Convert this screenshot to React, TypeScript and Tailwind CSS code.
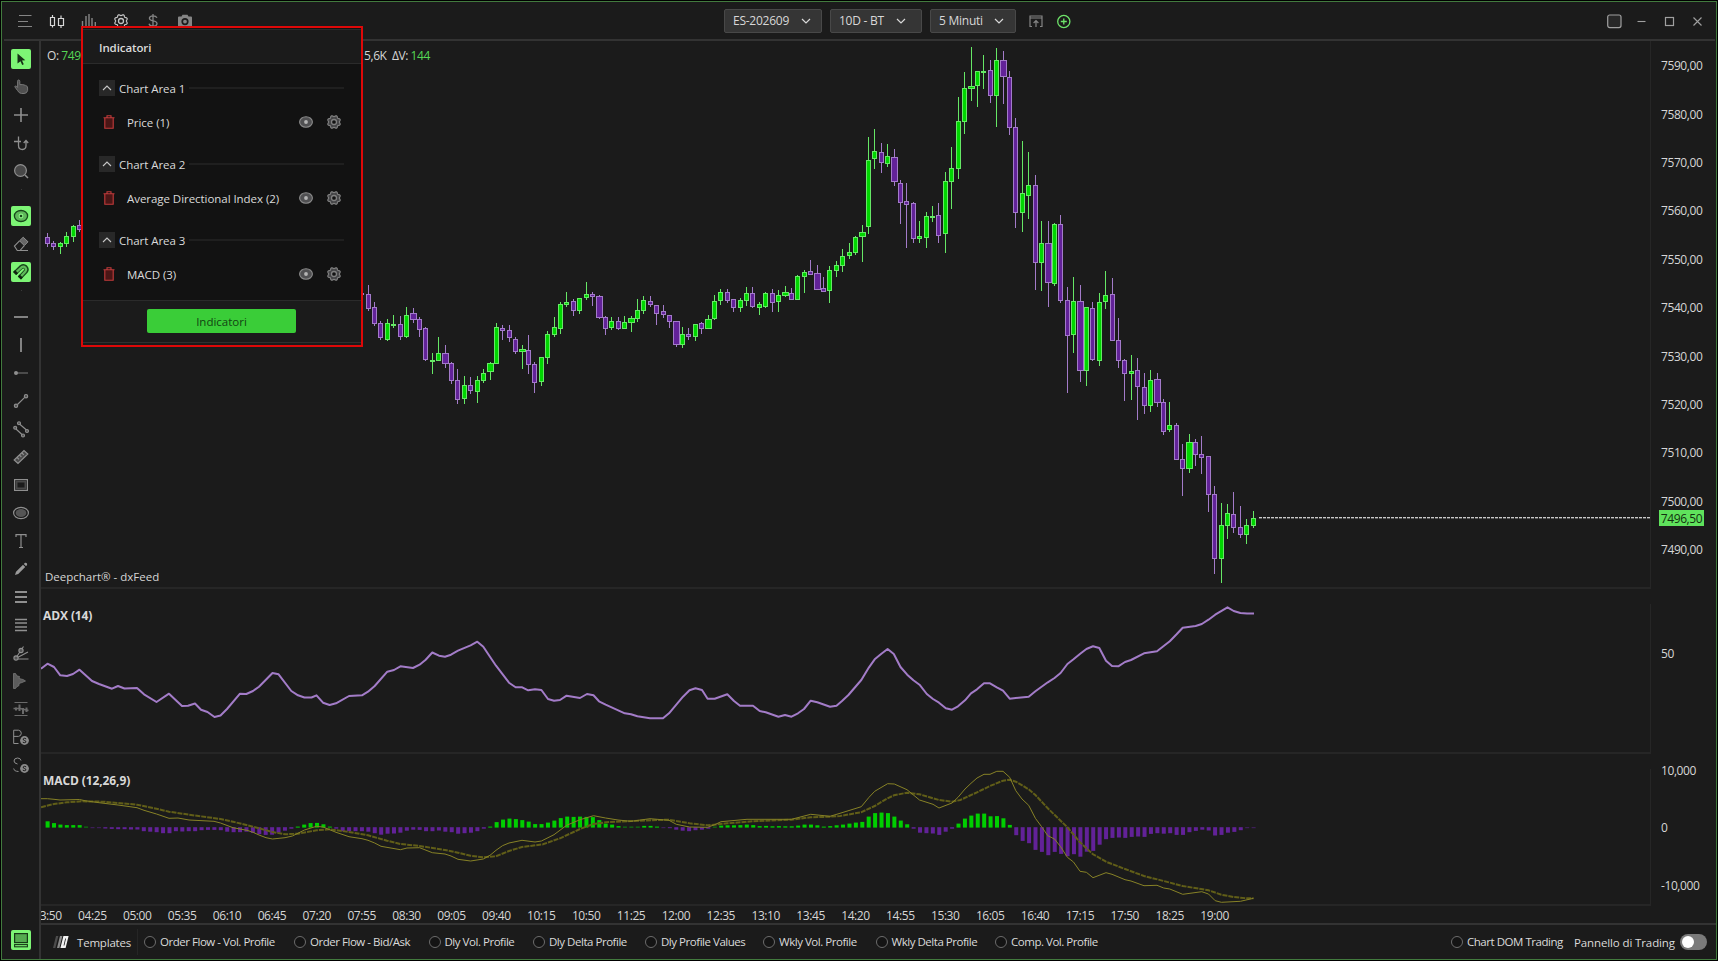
import React from "react";

type Candle = [number, 0 | 1, number, number, number, number, 1?];

const CANDLES: Candle[] = [
  [47, 0, 237, 244, 233, 247], [53, 0, 243, 247, 241, 250], [60, 1, 243, 247, 242, 254],
  [66, 1, 236, 244, 232, 247], [73, 1, 226, 237, 225, 242], [79, 0, 225, 230, 220, 232],
  [361, 0, 293, 295, 290, 297], [368, 0, 294, 309, 285, 311], [374, 0, 307, 324, 302, 326],
  [380, 0, 323, 338, 321, 340], [387, 1, 323, 340, 319, 341], [393, 1, 324, 326, 315, 328],
  [400, 0, 324, 337, 316, 340], [406, 1, 315, 337, 307, 338], [413, 0, 313, 320, 308, 323, 1],
  [419, 0, 319, 330, 317, 337], [425, 0, 328, 360, 327, 361], [432, 1, 360, 362, 353, 374],
  [438, 1, 353, 361, 337, 361], [445, 0, 353, 364, 345, 368, 1], [451, 0, 363, 381, 362, 384],
  [457, 0, 380, 400, 369, 404], [464, 1, 385, 399, 376, 404], [470, 0, 385, 391, 377, 394],
  [477, 1, 380, 392, 376, 403], [483, 1, 373, 381, 369, 383], [490, 1, 363, 372, 362, 380, 1],
  [496, 1, 327, 364, 323, 364], [502, 0, 328, 331, 325, 340], [509, 0, 330, 338, 325, 342],
  [515, 0, 339, 352, 337, 354], [522, 1, 349, 352, 345, 369, 1], [528, 0, 350, 365, 335, 374],
  [534, 0, 364, 383, 362, 393], [541, 1, 357, 382, 357, 386], [547, 1, 334, 358, 331, 364],
  [554, 1, 327, 335, 317, 337], [560, 1, 304, 329, 302, 334], [566, 1, 302, 305, 292, 307],
  [573, 0, 301, 311, 299, 316], [579, 1, 298, 311, 298, 314], [586, 1, 294, 298, 282, 300],
  [592, 0, 294, 297, 292, 306], [599, 0, 296, 318, 295, 319, 1], [605, 0, 317, 329, 316, 335],
  [611, 1, 321, 328, 317, 330], [618, 0, 321, 329, 317, 330], [624, 1, 322, 329, 316, 329],
  [631, 1, 318, 323, 316, 332, 1], [637, 1, 310, 319, 299, 322], [643, 1, 300, 311, 296, 314],
  [650, 0, 301, 305, 296, 307], [656, 0, 305, 314, 305, 325], [663, 0, 311, 315, 305, 318],
  [669, 0, 315, 322, 315, 328], [676, 0, 321, 345, 321, 347, 1], [682, 1, 334, 345, 327, 348],
  [688, 0, 334, 337, 328, 340], [695, 1, 324, 337, 324, 341], [701, 0, 323, 329, 322, 334],
  [708, 1, 319, 329, 315, 329, 1], [714, 1, 301, 319, 295, 320], [720, 1, 292, 301, 289, 305],
  [727, 0, 292, 301, 289, 303], [733, 0, 299, 308, 299, 312], [740, 1, 300, 308, 298, 312],
  [746, 1, 293, 301, 287, 306], [752, 0, 293, 307, 287, 308], [759, 1, 304, 308, 302, 315],
  [765, 1, 293, 307, 292, 308], [772, 0, 293, 303, 289, 312], [778, 1, 295, 302, 290, 312],
  [785, 1, 292, 296, 286, 297, 1], [791, 0, 293, 300, 288, 300], [797, 1, 276, 300, 275, 300],
  [804, 1, 272, 277, 270, 293], [810, 0, 271, 275, 260, 275], [817, 0, 273, 290, 265, 290, 1],
  [823, 0, 288, 292, 277, 292], [829, 1, 270, 291, 266, 303], [836, 1, 265, 271, 261, 277],
  [842, 1, 256, 266, 249, 272], [849, 1, 252, 256, 243, 259], [855, 1, 237, 253, 236, 255],
  [862, 1, 232, 237, 225, 262, 1], [868, 1, 160, 227, 137, 234], [874, 1, 151, 159, 129, 169],
  [881, 0, 152, 163, 143, 173], [887, 1, 156, 164, 144, 167], [894, 0, 157, 182, 149, 186, 1],
  [900, 0, 183, 203, 180, 224], [906, 0, 201, 205, 183, 248], [913, 0, 203, 239, 202, 243],
  [919, 1, 236, 239, 221, 243], [926, 1, 216, 238, 212, 248], [932, 1, 216, 218, 206, 222],
  [938, 0, 215, 236, 203, 243], [945, 1, 181, 234, 172, 253], [951, 1, 168, 182, 147, 209],
  [958, 1, 121, 169, 97, 179], [964, 1, 88, 122, 72, 134], [971, 1, 86, 89, 47, 101, 1],
  [977, 1, 71, 86, 71, 107], [983, 1, 71, 73, 55, 89], [990, 0, 70, 96, 60, 103],
  [996, 1, 60, 96, 48, 127], [1003, 0, 60, 77, 51, 104, 1], [1009, 0, 77, 128, 71, 135],
  [1015, 0, 127, 213, 118, 228], [1022, 1, 193, 213, 141, 232], [1028, 1, 185, 196, 152, 219],
  [1035, 0, 185, 263, 175, 290], [1041, 1, 243, 263, 221, 291], [1048, 0, 243, 283, 221, 307, 1],
  [1054, 1, 224, 284, 223, 286], [1060, 0, 224, 301, 215, 303], [1067, 0, 300, 336, 287, 393],
  [1073, 1, 301, 335, 277, 353], [1080, 0, 301, 371, 285, 382, 1], [1086, 1, 307, 371, 307, 386],
  [1092, 0, 308, 360, 302, 361], [1099, 1, 302, 361, 293, 366], [1105, 1, 295, 302, 271, 309],
  [1112, 0, 294, 341, 278, 341], [1118, 0, 340, 361, 318, 368], [1124, 0, 360, 374, 359, 401],
  [1131, 1, 371, 374, 355, 400], [1137, 0, 370, 387, 358, 420], [1144, 0, 387, 406, 373, 414],
  [1150, 1, 380, 406, 370, 412], [1157, 0, 379, 403, 373, 407, 1], [1163, 0, 402, 432, 399, 435],
  [1169, 1, 425, 430, 402, 432], [1176, 0, 425, 460, 423, 460], [1182, 0, 459, 469, 444, 496],
  [1189, 1, 442, 469, 434, 473, 1], [1195, 0, 442, 455, 439, 466], [1201, 0, 454, 458, 436, 474],
  [1208, 0, 456, 495, 456, 512], [1214, 0, 494, 559, 486, 574], [1221, 1, 525, 559, 503, 583],
  [1227, 1, 513, 526, 504, 539], [1233, 0, 514, 528, 492, 533], [1240, 0, 527, 535, 506, 538],
  [1246, 1, 525, 535, 519, 544], [1253, 1, 518, 526, 511, 528],
];

const ADX =
  "41,668.7 47.5,663.7 54,667 60.3,675.3 67,676 73,674 79.5,669.7 92,681 99,684 112,688.7 118,686 124.5,688.5 137,688 144,694.3 156.5,702 169,693.7 182,706 188,705.7 195,703.5 201,709.7 207.5,712 214.5,717 220.5,715.5 227,709 240,693.7 246.3,694 253,691 259,686.7 272.5,673 278.6,674.3 291.3,691 298,695.3 304.4,697.5 311.5,697.5 316.5,695.3 323,702.7 329.6,705 336,703.3 349,696 362,695.3 368,691.7 374.7,686 387.3,671.7 394,670 400.4,666.3 413,668 419.6,664.7 425.7,659.7 432.3,652.5 439,655.7 445,656.7 451,654.7 458,650.7 470.6,645.3 477.3,641.7 483.3,646.7 496,665.7 509,682.7 515.6,687.3 522.2,687.3 528.2,690.3 535,689.3 541.4,690 548,699 554,700.7 560,700 566.6,695.7 580,698 587,694 593.5,695.3 599,701.3 605.6,704.7 624.8,713.3 631,714.3 637.4,716.3 650,718.3 663,718.3 669,713.3 683,696.7 689.5,690.3 695.5,688.3 702,690 707.6,698.7 714.7,698.7 727.3,694.3 734,701 740,705.7 753,705.7 759.7,711 765.7,712.3 778.4,716.7 785,715 791.5,716.7 798,713.3 804,709 810.7,700.7 817.3,702.3 830,706.7 836.5,705.7 842,701 848.4,695 861.3,680 869,667.3 874.7,659.3 881.4,653.7 887.6,649 893.8,654 900.5,667 907.2,674.7 913.4,680.3 919.5,684.7 926.8,694 933,699 939,702.7 945.8,708.3 952,709.7 958,706.3 965,700.3 971,693.3 977,689.3 984,683.3 990,683.3 996.8,687.3 1003,690.7 1009.7,698.7 1015.8,698 1028.7,696.7 1035.4,691.3 1047.8,682.3 1054.5,678 1060.6,673 1067.4,664 1073.5,659.3 1080.2,653.7 1086.4,649 1093,646.3 1099.3,648 1106,660.7 1112,666 1118.3,666.3 1125,662 1131,660 1144,653.3 1157,651.3 1163.7,646 1169.8,641.3 1176.6,634.3 1182.7,627.7 1195.6,626 1201.8,624 1208.5,619.7 1215.2,614.7 1227.5,607.3 1233.7,611 1240.4,613 1247,613.5 1254,613.5";

const MACD =
  "41,798.7 47.5,798.7 54,799.3 60,800 79.5,799.5 85,800.7 99,802.7 118,805 137,807.7 144,810.3 156.5,814 169,818.3 178,818 189,820 214,821.3 220.5,823 233,827.7 247,830.3 253,832.3 259,835 266,837.7 272.5,839 285,837.7 292.4,836 304.4,830 316.5,826.3 323,827 336,832.3 349,836.7 362,838.7 368,840.3 374.7,843 381,846.3 400.4,849.7 407,848 419.6,847.7 432.3,852.7 445,854 451,856 458,859.3 470.6,861 483.3,859 490,855.3 496,850.3 502.5,845.7 509,843 522,840.3 535,842 541.4,841 554,834.7 566.6,825.3 580,819.7 593.5,815.7 605.6,818 618,820 631,821.3 650,818.7 669,820.3 676.3,824.3 689.5,827 707.6,827.3 714.7,824.7 721,821.7 747,819.3 791.5,819.3 810.7,814.3 830,816.3 840,813.3 861.3,806.7 869,797.3 874.7,791.3 887.6,783.7 894.3,784 907,789.7 919.5,800 933,804.3 939,808 952,803 958,797.3 965,789 971,783.3 977,778 984,774.3 990,774.3 996.8,771.3 1003,771.3 1009.7,777.3 1015.8,790.7 1022,799 1028.7,805.3 1035.4,818.3 1041.6,826.7 1047.8,835.7 1054.5,839 1060.6,846.7 1067.4,857.3 1073.5,862 1080,871.3 1086.4,872.3 1093,877.7 1106,872.7 1112,874.3 1125,879.7 1131,881 1144,885.7 1157,885.3 1163.7,888 1169.8,889 1182.7,894.3 1201.8,891.7 1208.5,894 1215.2,900.7 1221.4,902.3 1240.4,901.3 1253.5,898.3";

const SIGNAL =
  "41,807.3 54,804 67,802.3 82,801.3 104,801.7 137,804.7 156.5,808.7 169,811.7 189,814.7 220.5,819 233,821.7 253,826.7 272.5,832 285,834.3 298,833.7 316.5,830.3 329.6,829.3 349,832 368,835.3 387,840.7 400.4,844 419.6,846 445,850 458,852.7 470.6,855.7 483.3,857.3 496,856.3 509,851 522,847 543,844.3 560,838.3 580,829 593.5,824 605.6,822.3 631,821 669,819.7 689.5,823.3 707.6,825.3 727.3,823.3 753,821.3 791.5,819.7 810.7,817.3 830,816.7 840,816 861,812.3 874.7,806 887.6,798.3 894,795.3 907,792.7 919.5,794.3 939,800 952,801.7 960.4,800 977,792.3 990,786 1003,780.7 1009.7,779.7 1015.8,781.7 1028.7,789.3 1035.4,795 1047.8,808.3 1067.4,827.3 1080,842.3 1093,854.3 1106,861.7 1125,869 1144,876 1163.7,881 1182.7,886 1208.5,890.3 1221.4,894.7 1233.7,897 1247,898.3 1253.5,898.3";

const HIST = [
  6.3, 4.5, 3, 2.5, 2.5, 2.5, 0.5, -0.5, -0.7, -1.3, -1.7, -2, -2, -2.3, -2.3, -4, -4.5, -5, -6, -6, -4, -4.3, -4, -4, -3,
  -2.7, -2.7, -3, -4.5, -5, -5, -4.5, -5.7, -7, -7.7, -7.5, -5.5, -3.5, -1.5, 1, 3, 4.5, 4.7, 3.3, 1, -1.5, -4, -4, -4, -4,
  -4.5, -6, -7.5, -6.5, -6.3, -5.5, -3.5, -2.5, -2.7, -4, -4, -3.3, -4.5, -5, -6.5, -6, -5.5, -4, -1.5, 1, 5.5, 8, 9, 8.5, 7.5,
  6, 3.5, 3.5, 5, 7, 9.5, 11, 10.7, 11, 10.7, 10.5, 7.5, 4, 3, 1.5, 0.7, 0.5, 0.7, 1.7, 1.7, 1, -0.5, -1, -2.5, -3.5,
  -4, -3, -2.5, -1.5, 0.8, 2, 2.3, 2.3, 2.5, 3, 2.5, 1.5, 1.7, 1.3, 1.5, 1.3, 1.3, 2, 3, 3, 2.3, 1, 1.5, 2.3, 3,
  4, 5, 5.7, 11, 14.5, 15, 14.5, 11, 7, 3.3, -1.5, -5.5, -6, -6.3, -7.7, -4.5, -1.5, 4, 9, 12, 14, 14, 11.3, 11.5, 9.3,
  2.7, -8, -13.7, -16, -22.7, -24.7, -28, -24.7, -26.7, -29, -27, -29.5, -24.5, -23.7, -17.5, -12, -10.7, -10.3, -10.7, -9.7, -9.3, -9.7, -6.7, -6, -6.5,
  -6, -7.7, -7.7, -5, -3.7, -2.5, -3.3, -8.3, -7.7, -5.5, -4.7, -3, -0.8, -0.8,
];

const PRICES = [7590, 7580, 7570, 7560, 7550, 7540, 7530, 7520, 7510, 7500, 7490];

const TIMES = Array.from({ length: 27 }, (_, i) => {
  const m = 230 + 35 * i;
  return `${String(Math.floor(m / 60)).padStart(2, "0")}:${String(m % 60).padStart(2, "0")}`;
});

function Ico({ s = 20, children }: { s?: number; children: React.ReactNode }) {
  return (
    <svg width={s} height={s} viewBox={`0 0 ${s} ${s}`} fill="none" stroke="currentColor" className="block shrink-0">
      {children}
    </svg>
  );
}

const gearPath = (() => {
  const pts: string[] = [];
  for (let i = 0; i <= 64; i++) {
    const a = (i / 64) * Math.PI * 2;
    const r = 6 + 0.65 * Math.cos(8 * a + Math.PI);
    pts.push(`${(7 + r * Math.cos(a)).toFixed(2)} ${(7 + r * Math.sin(a)).toFixed(2)}`);
  }
  return `M${pts.join(" L")} Z`;
})();

function Gear({ filled = false }: { filled?: boolean }) {
  return (
    <Ico s={14}>
      <path d={gearPath} strokeWidth="1.2" fill={filled ? "#454547" : "none"} />
      <circle cx="7" cy="7" r="2.5" strokeWidth="1.3" fill={filled ? "#121212" : "none"} />
    </Ico>
  );
}

function Chevron() {
  return (
    <Ico s={10}>
      <path d="M1 3 L5 7 L9 3" strokeWidth="1.2" />
    </Ico>
  );
}

const coin = (
  <g>
    <circle cx="13.5" cy="13.5" r="4.4" fill="#8a8a8a" stroke="none" />
    <path d="M15.2 11.9 Q13.5 10.7 12.3 11.8 Q11.7 13.1 13.5 13.5 Q15.5 14 14.8 15.2 Q13.4 16.2 11.8 15.2" stroke="#1b1b1b" strokeWidth="1" />
  </g>
);

const TOOLS_A: [React.ReactNode, boolean][] = [
  [<path d="M6.5 4.5 L14.3 11.2 L11 11.6 L12.8 15.3 L11.2 16 L9.5 12.3 L6.5 14.5 Z" fill="#163016" stroke="none" />, true],
  [<path d="M6.6 10.5 V4.2 Q6.6 3 7.6 3 Q8.8 3 8.8 4.4 V7.6 Q12 7.2 14.5 8.4 Q16.8 9 16.6 11 V13.5 Q16 16.5 13 16.5 H10.5 Q8 16.3 6.5 13.5 L3.8 9.8 Q4.2 8.4 5.4 9.2 Z" fill="#505050" strokeWidth="1" stroke="#777" />, false],
  [<path d="M3 10 H17 M10 3 V17" strokeWidth="1.6" />, false],
  [<path d="M3 8.5 H10 M7.5 3.5 V12.5 Q7.5 16.5 11.5 16.5 Q15 16.3 15 12.5 V8 M12.7 10 L15 7.5 L17.2 10" strokeWidth="1.3" />, false],
  [<g><circle cx="9.5" cy="9.5" r="5.9" fill="#484848" strokeWidth="1.2" /><path d="M14 14 L17 17" strokeWidth="1.5" /></g>, false],
];

const TOOLS_B: [React.ReactNode, boolean][] = [
  [<g stroke="#17451a"><ellipse cx="10" cy="10" rx="6.6" ry="5.5" fill="#5fb85a" strokeWidth="1.3" /><circle cx="10" cy="10" r="2.4" fill="#8df586" stroke="none" /><circle cx="10" cy="10" r="1.3" fill="#17451a" stroke="none" /></g>, true],
  [<g><path d="M8.5 6.8 L12.2 3.2 L17 7.8 L13.3 11.6 Z" fill="#666" strokeWidth="1" /><path d="M8.5 6.8 L3.4 12 L6.3 16.5 H9 L13.3 11.6 M6 16.5 H17" strokeWidth="1.1" /></g>, false],
  [<g><path d="M3.6 11.5 L10.3 5 Q12.6 3.4 14.5 5.2 Q16.4 7.3 14.8 9.4 L8.4 16" stroke="#17451a" strokeWidth="4.4" /><path d="M5 10.3 L10.5 5.3 Q12.6 4 14.2 5.5 Q15.8 7.3 14.5 9.2 L9.6 14.8" stroke="#5fbc5a" strokeWidth="2.3" /><path d="M3.6 11.5 L5.6 9.6 M8.4 16 L10.2 14.1" stroke="#0f240f" strokeWidth="4.4" /></g>, true],
];

const TOOLS_C: React.ReactNode[] = [
  <path d="M3 10 H17" strokeWidth="1.8" />,
  <path d="M10 3 V17" strokeWidth="1.8" />,
  <g><path d="M5 10 H17" strokeWidth="1.5" stroke="#5c5c5c" /><circle cx="5" cy="10" r="2" fill="currentColor" stroke="none" /></g>,
  <g strokeWidth="1.1"><path d="M6.5 13.5 L13.7 6.3" /><circle cx="5" cy="14.8" r="1.7" fill="#555" /><circle cx="15" cy="5.2" r="1.7" fill="#555" /></g>,
  <g strokeWidth="1.1"><path d="M5 10 L11.5 16 M8.5 5 L15.5 11" /><circle cx="4.2" cy="8.8" r="1.5" fill="#555" /><circle cx="12" cy="16.5" r="1.5" fill="#555" /><circle cx="8" cy="4.2" r="1.5" fill="#555" /><circle cx="16" cy="12" r="1.5" fill="#555" /></g>,
  <path d="M3.2 13 L13 3.6 L16.8 7 L7 16.5 Z M6.2 10.5 L8 12.3 M8.6 8.2 L10.4 10 M11 6 L12.8 7.8" strokeWidth="1.2" fill="#4a4a4a" />,
  <g><rect x="3.6" y="4.6" width="12.8" height="10.8" strokeWidth="1.2" /><rect x="5.6" y="6.6" width="8.8" height="6.8" strokeWidth="1.8" stroke="#484848" /></g>,
  <g><ellipse cx="10" cy="10" rx="7.4" ry="5.6" strokeWidth="1.2" /><ellipse cx="10" cy="10" rx="5.4" ry="4" fill="#555" stroke="none" /></g>,
  <path d="M5 6 V3.7 H15 V6 M10 3.7 V16.3 M8 16.5 H12" strokeWidth="1.2" />,
  <path d="M4 16 L5 12.8 L12 5.8 L14.2 8 L7.2 15 Z M12.8 5 L14 3.8 Q15.3 3.5 16 4.6 Q16.4 5.6 15.8 6.4 L14.9 7.1 Z" fill="#9a9a9a" stroke="none" />,
  <path d="M4 5 H16 M4 10 H16 M4 15 H16" strokeWidth="1.9" />,
  <path d="M4 4.5 H16 M4 8 H16 M4 12 H16 M4 15.5 H16" strokeWidth="1.5" />,
  <g strokeWidth="1.1"><path d="M5.5 14 L12.5 3.5 M6.5 14.5 L17 9 M7 16 H17.5" /><circle cx="5" cy="15" r="2.1" fill="#555" /><circle cx="10" cy="7.5" r="2.1" fill="#555" /></g>,
  <path d="M2.5 2.5 H4.5 L6 5 L8.5 5.5 L8 7.5 L12 8.5 L14.5 10 L11 11.5 L8 12.5 V14.5 L5.5 16 L4.5 17.5 H2.5 Z" fill="#5c5c5c" strokeWidth="0.8" stroke="#777" />,
  <g stroke="#6a6a6a"><path d="M3.5 3.5 H16.5 M3.5 16.5 H16.5" strokeWidth="1" /><path d="M2.5 9.5 H9 L17.5 11.5" strokeWidth="1.6" /><path d="M5 8.5 V11.5 M8.5 5.5 V12 M12 9 V15 M15.5 8.5 V13" strokeWidth="2" /></g>,
  <g strokeWidth="1"><path d="M2.7 16.5 V3.2 H7.5 Q10.3 3.6 10.3 6.3 Q10.2 9 7.5 9.4 H2.7 M2.7 16.5 H7.5" />{coin}</g>,
  <g strokeWidth="1"><path d="M10 5.5 Q9.5 3 6.5 3 Q3 3.2 3 6 Q3.2 8.4 6.5 9 M2.7 13.5 Q3 16.3 7.5 16.5" />{coin}</g>,
];

function Tool({ active, children }: { active?: boolean; children: React.ReactNode }) {
  return (
    <div className="flex h-7 w-full shrink-0 items-center justify-center">
      <div className={active ? "size-5 rounded-[2px] bg-[#7df575] text-[#173a17]" : "size-5 text-[#8f8f8f]"}>
        <Ico>{children}</Ico>
      </div>
    </div>
  );
}

function Select({ label, className }: { label: string; className: string }) {
  return (
    <div className={`flex h-6 items-center justify-between rounded-[2px] border border-[#484848] bg-[#353535] text-[12px] tracking-[-0.25px] text-[#d8d8d8] ${className}`}>
      <span className="whitespace-nowrap pt-px">{label}</span>
      <Chevron />
    </div>
  );
}

function Header() {
  return (
    <header className="flex h-[37px] shrink-0 items-center text-[#858585]">
      <div className="flex w-[722px] items-center pl-[15px]">
        <div className="w-[32px]">
          <Ico s={16}><path d="M2 2.5 H14.5 M1 8.5 H11 M1 13.5 H15" strokeWidth="1" /></Ico>
        </div>
        <div className="w-[32px] text-[#d8d8d8]">
          <Ico s={16}><path d="M1.5 4.5 H5.5 V12.5 H1.5 Z M3.5 2 V4.5 M3.5 12.5 V14.5 M9.5 5.5 H14.5 V12.5 H9.5 Z M12 2.5 V5.5 M12 12.5 V15" strokeWidth="1.2" /></Ico>
        </div>
        <div className="w-[32px]">
          <Ico s={16}><path d="M1.5 8 V14 M5 3 V14 M8 1 V14 M11 5 V14 M14.3 9 V14 M1 14.5 H15" strokeWidth="1.4" /></Ico>
        </div>
        <div className="w-[32px] pl-px text-[#c4c4c4]"><Gear /></div>
        <div className="w-[32px]">
          <Ico s={16}><path d="M12 4.8 Q11 2.8 8 2.8 Q4.4 3 4.4 5.2 Q4.6 7.3 8 7.9 Q12 8.4 12 10.8 Q11.6 13.2 8 13.2 Q4.8 13.2 4 10.8 M8 1 V15" strokeWidth="1.3" /></Ico>
        </div>
        <Ico s={16}><path fillRule="evenodd" d="M2 3.5 H4.5 L5.5 1.8 H10.5 L11.5 3.5 H14 Q15 3.5 15 4.5 V13 Q15 14 14 14 H2 Q1 14 1 13 V4.5 Q1 3.5 2 3.5 Z M8 5 A3.6 3.6 0 1 0 8 12.2 A3.6 3.6 0 1 0 8 5 Z M8 6.7 A1.9 1.9 0 1 1 8 10.5 A1.9 1.9 0 1 1 8 6.7 Z" fill="currentColor" stroke="none" /></Ico>
      </div>
      <Select label="ES-202609" className="w-[98px] pl-[8px] pr-[10px]" />
      <Select label="10D - BT" className="ml-[8px] w-[92px] pl-[8px] pr-[15px]" />
      <Select label="5 Minuti" className="ml-[8px] w-[86px] pl-[8px] pr-[11px]" />
      <div className="ml-[12px]">
        <Ico s={16}><path d="M4 13.5 H2 V3 H14 V13.5 H12 M2 5 H14 M8 14 V8 M5.6 10 L8 7.6 L10.4 10" strokeWidth="1.2" /></Ico>
      </div>
      <div className="ml-[12px] text-[#6ee46a]">
        <Ico s={16}><circle cx="7.8" cy="8.5" r="6.1" strokeWidth="1.3" /><path d="M4.8 8.5 H10.8 M7.8 5.5 V11.5" strokeWidth="1.3" /></Ico>
      </div>
      <div className="ml-auto flex items-center gap-[12px] pr-[10px] text-[#a0a0a0]">
        <Ico s={16}><rect x="1.7" y="2" width="13.3" height="12.6" rx="2" strokeWidth="1.2" fill="#282828" /></Ico>
        <Ico s={16}><path d="M3.5 8.5 H11.5" strokeWidth="1.1" /></Ico>
        <Ico s={16}><rect x="3.5" y="4.5" width="8" height="8" strokeWidth="1.2" /></Ico>
        <Ico s={16}><path d="M3.5 4.5 L11.5 12.5 M11.5 4.5 L3.5 12.5" strokeWidth="1.1" /></Ico>
      </div>
    </header>
  );
}

function Sidebar() {
  return (
    <aside className="flex w-[37px] shrink-0 flex-col pl-[1px] pt-[4px]">
      {TOOLS_A.map(([d, a], i) => <Tool key={i} active={a}>{d}</Tool>)}
      <div className="flex h-[17px] justify-center pt-[4px]"><i className="size-px bg-[#3a3a3a]" /></div>
      {TOOLS_B.map(([d, a], i) => <Tool key={i} active={a}>{d}</Tool>)}
      <div className="flex h-[17px] justify-center pt-[4px]"><i className="size-px bg-[#3a3a3a]" /></div>
      {TOOLS_C.map((d, i) => <Tool key={i}>{d}</Tool>)}
      <div className="mt-auto pb-[5px]">
        <Tool active>
          <g><rect x="3.6" y="3.6" width="12.8" height="9" fill="#55ab50" strokeWidth="1.2" /><rect x="3.6" y="14.6" width="12.8" height="2.2" strokeWidth="1.1" /></g>
        </Tool>
      </div>
    </aside>
  );
}

function Plot() {
  return (
    <svg width="1610" height="865" viewBox="41 41 1610 865" className="block shrink-0">
      <g fill="#262626" shapeRendering="crispEdges">
        <rect x="1650" y="41" width="1" height="548" />
        <rect x="41" y="587" width="1610" height="2" />
        <rect x="1650" y="604" width="1" height="150" />
        <rect x="41" y="752" width="1610" height="2" />
        <rect x="1650" y="769" width="1" height="137" />
        <rect x="41" y="904" width="1610" height="2" />
      </g>
      <g shapeRendering="crispEdges">
        {CANDLES.map(([x, up, t, b, hi, lo, wide]) => {
          const r = wide ? 3 : 2;
          const edge = up ? "#66e866" : "#a37bc9";
          const h = Math.max(b - t, 2);
          return (
            <g key={x}>
              <rect x={x} y={hi} width="1" height={lo - hi} fill={edge} />
              <rect x={x - r} y={t} width={2 * r + 1} height={h} fill={edge} />
              {h > 2 && <rect x={x - r + 1} y={t + 1} width={2 * r - 1} height={h - 2} fill={up ? "#00d600" : "#622298"} />}
            </g>
          );
        })}
      </g>
      <path d="M1259 517.5 H1650" stroke="#c9c9c9" strokeWidth="1" strokeDasharray="3 1" />
      <path d="M1259 518.5 H1650" stroke="#5c5c5c" strokeWidth="1" strokeDasharray="3 1" />
      <polyline points={ADX} fill="none" stroke="#a37cc8" strokeWidth="2" strokeLinejoin="round" />
      <g>
        {HIST.map((v, i) => {
          const h = Math.max(Math.abs(v), 1);
          return (
            <rect key={i} x={45.6 + i * 6.4149} y={v > 0 ? 827.6 - h : 827.2} width="4" height={h}
              fill={v > 0 ? "#00cf00" : "#622298"} opacity={Math.abs(v) < 1 ? 0.6 : 1} />
          );
        })}
      </g>
      <polyline points={SIGNAL} fill="none" stroke="#615e18" strokeWidth="2" strokeDasharray="5 1" />
      <polyline points={MACD} fill="none" stroke="#878226" strokeWidth="1" />
    </svg>
  );
}

function Axis() {
  return (
    <div className="relative w-[64px] shrink-0 pl-[10px] pt-px text-[12px] tracking-[-0.42px] text-[#d6d6d6]">
      {PRICES.map((p) => (
        <div key={p} className="flex h-[48.4px] items-center">{p},00</div>
      ))}
      <div className="absolute left-[8px] top-[469px] flex h-4 w-[45px] items-center justify-center bg-[#5fe25c] pt-[2px] text-[#12300f]">7496,50</div>
      <div className="mt-[71px] h-[17px] leading-[17px]">50</div>
      <div className="mt-[100px] h-[17px] leading-[17px]">10,000</div>
      <div className="mt-[40px] h-[17px] leading-[17px]">0</div>
      <div className="mt-[41px] h-[17px] leading-[17px]">-10,000</div>
    </div>
  );
}

const TEMPLATES: [string, string][] = [
  ["Order Flow - Vol. Profile", "w-[150px]"],
  ["Order Flow - Bid/Ask", "w-[134.5px]"],
  ["Dly Vol. Profile", "w-[104.5px]"],
  ["Dly Delta Profile", "w-[112px]"],
  ["Dly Profile Values", "w-[118px]"],
  ["Wkly Vol. Profile", "w-[112.5px]"],
  ["Wkly Delta Profile", "w-[119.5px]"],
  ["Comp. Vol. Profile", "w-[120px]"],
];

function Radio({ label, className }: { label: string; className: string }) {
  return (
    <div className={`flex shrink-0 items-center gap-[4px] whitespace-nowrap text-[11.5px] tracking-[-0.47px] text-[#dadada] ${className}`}>
      <i className="size-3 rounded-full border border-[#6c6c6c] bg-[#141414]" />
      {label}
    </div>
  );
}

function Footer() {
  return (
    <footer className="flex h-[34px] shrink-0 items-center text-[#dadada]">
      <svg width="16" height="12" viewBox="0 0 16 12" className="ml-[12px]">
        <path d="M3 0 H5.4 L2.4 12 H0 Z" fill="#4c4c4c" />
        <path d="M7 0 H9.4 L6.4 12 H4 Z" fill="#8c8c8c" />
        <path fillRule="evenodd" d="M10.4 0 H15.6 L12.6 12 H7.4 Z M12.2 2.6 L10.6 9.4 H11.4 L13 2.6 Z" fill="#f2f2f2" />
      </svg>
      <span className="ml-[8px] w-[60px] pt-[2px] text-[11.5px] tracking-[-0.2px]">Templates</span>
      <i className="h-[26px] w-px bg-[#262626]" />
      <div className="ml-[6px] flex">
        {TEMPLATES.map(([t, w]) => <Radio key={t} label={t} className={w} />)}
      </div>
      <Radio label="Chart DOM Trading" className="ml-auto w-[123px]" />
      <span className="w-[106px] whitespace-nowrap pt-[2px] text-[11.5px] tracking-[-0.12px]">Pannello di Trading</span>
      <span className="mr-[9px] flex h-4 w-[27px] items-center rounded-full bg-[#7a7a7a] p-[2px]">
        <i className="size-3 rounded-full bg-white" />
      </span>
    </footer>
  );
}

function IndicatorGroup({ n, name }: { n: number; name: string }) {
  return (
    <div className="h-[76px]">
      <div className="flex h-4 items-center">
        <span className="flex size-4 items-center justify-center bg-[#282828] text-[#c8c8c8]">
          <Ico s={10}><path d="M1 7 L5 3 L9 7" strokeWidth="1.1" /></Ico>
        </span>
        <span className="w-[74px] pl-[4px] pt-[2px] text-[11.5px] tracking-[-0.05px]">Chart Area {n}</span>
        <i className="h-[2px] flex-1 bg-[#1f1f1f]" />
      </div>
      <div className="mt-[18px] flex h-4 items-center">
        <svg width="12" height="14" viewBox="0 0 12 14" fill="none" stroke="#c23b3b" className="ml-[4px]">
          <path d="M1.8 3 V13.3 H10.2 V3" fill="#4a1616" strokeWidth="1.1" />
          <path d="M0.5 2.8 H11.5 M4 2.5 V0.7 H8 V2.5" strokeWidth="1.1" />
        </svg>
        <span className="flex-1 whitespace-nowrap pl-[12px] pt-[2px] text-[11.5px] tracking-[-0.05px]">{name} ({n})</span>
        <span className="text-[#8c8c8c]">
          <Ico s={14}>
            <ellipse cx="7" cy="7" rx="6.4" ry="5.3" fill="#505052" strokeWidth="1.1" />
            <circle cx="7" cy="7" r="1.9" fill="#b4b4b4" stroke="none" />
          </Ico>
        </span>
        <span className="ml-[14px] mr-[3px] text-[#808080]"><Gear filled /></span>
      </div>
    </div>
  );
}

function IndicatorPanel() {
  return (
    <div className="absolute left-[81px] top-[26px] flex h-[321px] w-[282px] flex-col border-2 border-[#de0808] bg-[#121212] pt-px text-[#dadada]">
      <div className="flex h-[35px] shrink-0 items-center border-b border-t border-[#2b2b2b] bg-[#1b1b1b] pl-[16px] pt-[2px] text-[11.5px] font-semibold tracking-[-0.1px]">Indicatori</div>
      <div className="h-[236px] shrink-0 pl-[16px] pr-[17px] pt-[16px]">
        <IndicatorGroup n={1} name="Price" />
        <IndicatorGroup n={2} name="Average Directional Index" />
        <IndicatorGroup n={3} name="MACD" />
      </div>
      <div className="flex h-[45px] shrink-0 flex-col border-t border-[#2b2b2b] bg-[#1b1b1b]">
        <div className="flex h-[42px] justify-center border-b border-[#303030] pr-px pt-[8px]">
          <button className="h-6 w-[149px] rounded-[2px] bg-[#3acd38] pt-px text-[11.5px] text-[#124412]">Indicatori</button>
        </div>
      </div>
    </div>
  );
}

export default function App() {
  return (
    <div className="relative h-[961px] w-[1718px] overflow-hidden bg-black p-px font-['Open_Sans','Noto_Sans',sans-serif]">
      <div className="flex h-[959px] w-[1716px] flex-col border border-[#427a3e] bg-[#1b1b1b]">
        <Header />
        <div className="ml-[2px] mr-[1px] h-[2px] shrink-0 bg-[#333333]" />
        <div className="flex min-h-0 flex-1">
          <Sidebar />
          <div className="w-[2px] shrink-0 bg-[#333333]" />
          <main className="flex min-w-0 flex-1 flex-col">
            <div className="relative flex h-[865px] shrink-0">
              <Plot />
              <Axis />
              <div className="absolute left-[6px] top-[6px] flex text-[12px] leading-[17px] tracking-[-0.42px] text-[#d6d6d6]">
                <span className="w-[317px]">O: <b className="font-normal text-[#55d655]">749</b></span>
                <span>5,6K&nbsp; ΔV: <b className="font-normal text-[#55d655]">144</b></span>
              </div>
              <div className="absolute left-[4px] top-[527px] text-[11.5px] leading-[17px] text-[#d6d6d6]">Deepchart® - dxFeed</div>
              <div className="absolute left-[2px] top-[566px] text-[12px] font-bold leading-[17px] tracking-[-0.1px] text-[#d8d8d8]">ADX (14)</div>
              <div className="absolute left-[2px] top-[731px] text-[12px] font-bold leading-[17px] tracking-[-0.1px] text-[#d8d8d8]">MACD (12,26,9)</div>
            </div>
            <div className="flex h-[17px] shrink-0 overflow-hidden text-[12px] leading-[19px] tracking-[-0.42px] text-[#d6d6d6]">
              {TIMES.map((t, i) => (
                <span key={t} className={i === 0 ? "-ml-[16px] w-[44.9px] shrink-0 text-center" : "w-[44.9px] shrink-0 text-center"}>{t}</span>
              ))}
            </div>
            <div className="h-[2px] shrink-0 bg-[#333333]" />
            <Footer />
          </main>
        </div>
      </div>
      <IndicatorPanel />
    </div>
  );
}
